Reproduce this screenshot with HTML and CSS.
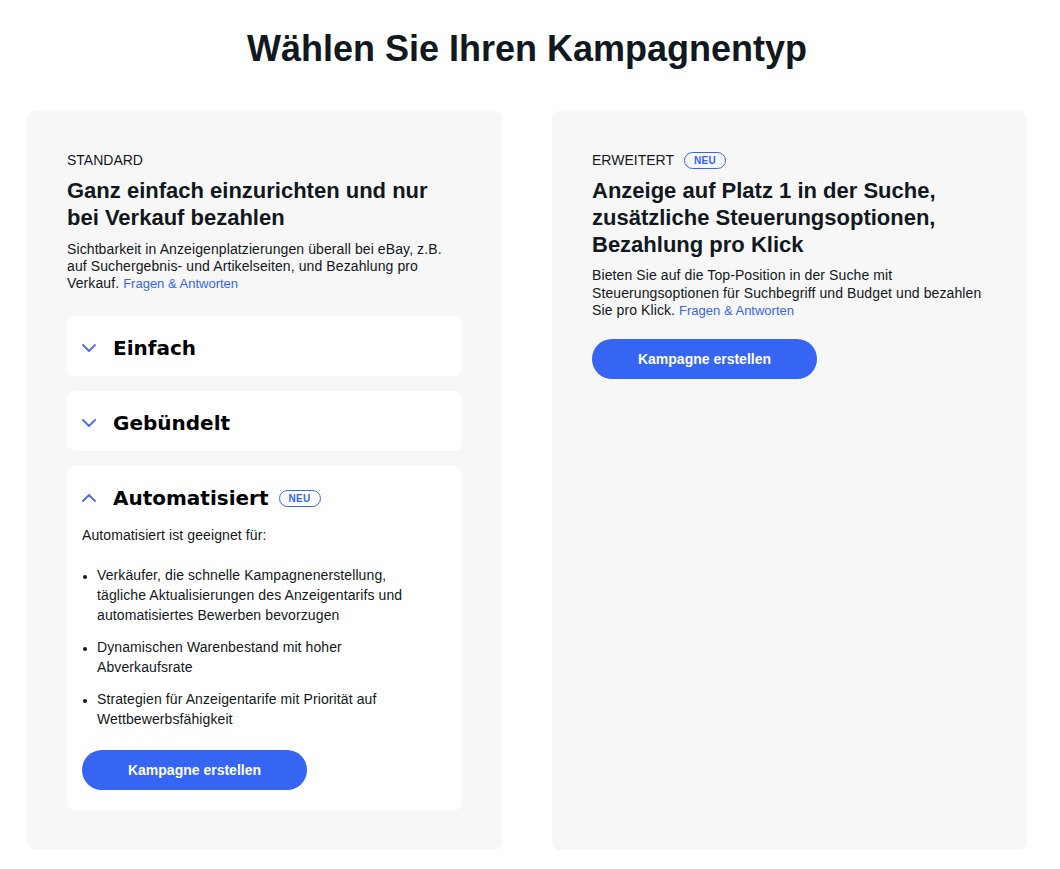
FILE: index.html
```html
<!DOCTYPE html>
<html lang="de">
<head>
    <meta charset="UTF-8">
    <meta name="viewport" content="width=device-width, initial-scale=1.0">
    <title>Kampagnentyp wählen</title>
    <link rel="stylesheet" href="styles.css">
</head>
<body>
    <div class="page">
        <h1>Wählen Sie Ihren Kampagnentyp</h1>
        <div class="columns">
            <section class="panel">
                <div class="eyebrow">STANDARD</div>
                <h2>Ganz einfach einzurichten und nur bei Verkauf bezahlen</h2>
                <p class="desc">Sichtbarkeit in Anzeigenplatzierungen überall bei eBay, z.B. auf Suchergebnis- und Artikelseiten, und Bezahlung pro Verkauf. <a href="#">Fragen &amp; Antworten</a></p>

                <div class="acc">
                    <div class="acc-head">
                        <svg class="chev" viewBox="0 0 14 8" width="14" height="8"><path d="M1 1l6 6 6-6" fill="none" stroke="currentColor" stroke-width="1.8" stroke-linecap="round" stroke-linejoin="round"/></svg>
                        <span class="acc-title">Einfach</span>
                    </div>
                </div>
                <div class="acc">
                    <div class="acc-head">
                        <svg class="chev" viewBox="0 0 14 8" width="14" height="8"><path d="M1 1l6 6 6-6" fill="none" stroke="currentColor" stroke-width="1.8" stroke-linecap="round" stroke-linejoin="round"/></svg>
                        <span class="acc-title">Gebündelt</span>
                    </div>
                </div>
                <div class="acc open">
                    <div class="acc-head">
                        <svg class="chev" viewBox="0 0 14 8" width="14" height="8"><path d="M1 7l6-6 6 6" fill="none" stroke="currentColor" stroke-width="1.8" stroke-linecap="round" stroke-linejoin="round"/></svg>
                        <span class="acc-title">Automatisiert</span>
                        <span class="badge">NEU</span>
                    </div>
                    <div class="acc-body">
                        <p>Automatisiert ist geeignet für:</p>
                        <ul>
                            <li>Verkäufer, die schnelle Kampagnenerstellung, tägliche Aktualisierungen des Anzeigentarifs und automatisiertes Bewerben bevorzugen</li>
                            <li>Dynamischen Warenbestand mit hoher Abverkaufsrate</li>
                            <li>Strategien für Anzeigentarife mit Priorität auf Wettbewerbsfähigkeit</li>
                        </ul>
                        <button class="btn" type="button">Kampagne erstellen</button>
                    </div>
                </div>
            </section>

            <section class="panel">
                <div class="eyebrow">ERWEITERT <span class="badge">NEU</span></div>
                <h2>Anzeige auf Platz 1 in der Suche, zusätzliche Steuerungsoptionen, Bezahlung pro Klick</h2>
                <p class="desc">Bieten Sie auf die Top-Position in der Suche mit Steuerungsoptionen für Suchbegriff und Budget und bezahlen Sie pro Klick. <a href="#">Fragen &amp; Antworten</a></p>
                <button class="btn" type="button">Kampagne erstellen</button>
            </section>
        </div>
    </div>
</body>
</html>
```

FILE: styles.css
```css
body {
    margin: 0;
    padding: 0;
    background: #fff;
    font-family: "Liberation Sans", Arial, sans-serif;
    color: #111820;
}
.page {
    padding: 26px 33px 19px 27px;
}
h1 {
    margin: 0 0 39px;
    text-align: center;
    font-size: 36px;
    line-height: 46px;
    font-weight: bold;
}
.columns {
    display: grid;
    grid-template-columns: 1fr 1fr;
    gap: 50px;
}
.panel {
    background: #f7f7f7;
    border-radius: 8px;
    padding: 40px;
}
.eyebrow {
    font-size: 14px;
    line-height: 18px;
    display: flex;
    align-items: center;
    gap: 10px;
}
h2 {
    margin: 8px 0 10px;
    font-size: 22px;
    line-height: 27px;
    font-weight: bold;
}
.desc {
    margin: 0 0 24px;
    font-size: 14px;
    letter-spacing: 0.1px;
    line-height: 17px;
}
.panel:last-child h2 {
    margin-bottom: 9px;
}
.panel:last-child .desc {
    line-height: 17.5px;
    margin-bottom: 19px;
}
.desc a {
    color: #3665f3;
    font-size: 13px;
    line-height: 1;
    letter-spacing: 0;
    text-decoration: none;
}
.acc {
    background: #fff;
    border-radius: 8px;
    margin-bottom: 15px;
}
.acc:last-child {
    margin-bottom: 0;
}
.acc-head {
    box-sizing: border-box;
    height: 60px;
    display: flex;
    align-items: center;
    padding: 4px 15px 0;
}
.chev {
    color: #4a6ee8;
    margin-right: 17px;
}
.acc-title {
    font-family: "DejaVu Sans", Verdana, sans-serif;
    font-weight: bold;
    font-size: 20px;
    color: #000;
}
.acc-head .badge {
    margin-left: 10px;
}
.badge {
    display: inline-block;
    border: 1px solid #3665f3;
    border-radius: 9px;
    color: #3665f3;
    font-size: 10px;
    font-weight: bold;
    line-height: 15px;
    padding: 0 9px;
    letter-spacing: 0.3px;
}
.acc-body {
    padding: 1px 15px 20px;
    font-size: 14px;
    letter-spacing: 0.1px;
}
.acc-body p {
    margin: 0 0 21px;
    line-height: 17px;
}
.acc-body ul {
    margin: 0 0 21px;
    padding: 0 20px 0 15px;
}
.acc-body li {
    line-height: 20px;
    margin-bottom: 12px;
}
.acc-body li:last-child {
    margin-bottom: 0;
}
.acc-body li::marker {
    font-size: 12px;
}
.btn {
    display: block;
    width: 225px;
    height: 40px;
    border: none;
    border-radius: 20px;
    background: #3665f3;
    color: #fff;
    font-family: "Liberation Sans", Arial, sans-serif;
    font-weight: bold;
    font-size: 14px;
    cursor: pointer;
}
```
